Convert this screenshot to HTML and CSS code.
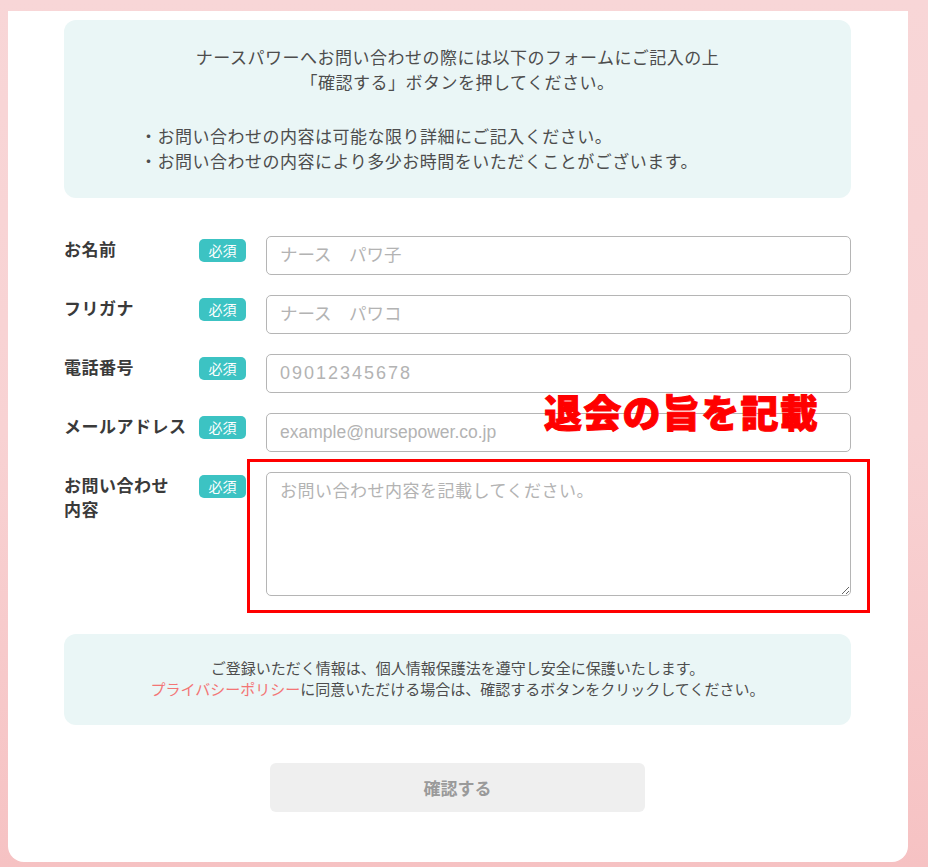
FILE: index.html
```html
<!DOCTYPE html>
<html lang="ja">
<head>
<meta charset="utf-8">
<title>お問い合わせ | ナースパワー</title>
<link rel="stylesheet" href="styles.css">
</head>
<body>
<div class="page">
  <main class="card">
    <section class="intro">
      <p class="intro-lead">ナースパワーへお問い合わせの際には以下のフォームにご記入の上<br>「確認する」ボタンを押してください。</p>
      <ul class="intro-notes">
        <li>・お問い合わせの内容は可能な限り詳細にご記入ください。</li>
        <li>・お問い合わせの内容により多少お時間をいただくことがございます。</li>
      </ul>
    </section>

    <form class="form">
      <div class="row">
        <label class="label" for="name">お名前</label>
        <span class="badge">必須</span>
        <input class="field" id="name" type="text" placeholder="ナース　パワ子">
      </div>
      <div class="row">
        <label class="label" for="kana">フリガナ</label>
        <span class="badge">必須</span>
        <input class="field" id="kana" type="text" placeholder="ナース　パワコ">
      </div>
      <div class="row">
        <label class="label" for="tel">電話番号</label>
        <span class="badge">必須</span>
        <input class="field field-tel" id="tel" type="tel" placeholder="09012345678">
      </div>
      <div class="row">
        <label class="label" for="mail">メールアドレス</label>
        <span class="badge">必須</span>
        <input class="field" id="mail" type="email" placeholder="example@nursepower.co.jp">
      </div>
      <div class="row">
        <label class="label" for="body">お問い合わせ<br>内容</label>
        <span class="badge">必須</span>
        <textarea class="field field-area" id="body" placeholder="お問い合わせ内容を記載してください。"></textarea>
      </div>

      <section class="privacy">
        <p>ご登録いただく情報は、個人情報保護法を遵守し安全に保護いたします。<br><a class="privacy-link" href="#">プライバシーポリシー</a>に同意いただける場合は、確認するボタンをクリックしてください。</p>
      </section>

      <div class="actions">
        <button class="submit" type="button" disabled>確認する</button>
      </div>
    </form>

    <div class="note-frame"></div>
    <p class="note-text">退会の旨を記載</p>
  </main>
</div>
</body>
</html>
```

FILE: styles.css
```css
html, body {
  margin: 0;
  padding: 0;
}

body {
  background: linear-gradient(to bottom, #f8d6d7 0%, #f8d2d3 50%, #f6c2c3 100%);
  font-family: "Noto Sans CJK JP", "Noto Sans", sans-serif;
  color: #4d4d4d;
  min-height: 867px;
}

.page {
  padding: 11px 20px 5px 8px;
}

.card {
  position: relative;
  width: 900px;
  height: 851px;
  box-sizing: border-box;
  background: #fff;
  border-radius: 0 0 16px 16px;
  padding: 9px 57px 0 56px;
}

/* Intro panel */
.intro {
  background: #eaf6f6;
  border-radius: 12px;
  padding: 24px 0 25px;
  font-size: 17px;
  line-height: 25px;
  letter-spacing: 0.5px;
  color: #4d4d4d;
}

.intro-lead {
  margin: 0;
  text-align: center;
}

.intro-notes {
  list-style: none;
  margin: 29px 0 0;
  padding: 0 0 0 76px;
}

/* Form rows */
.form {
  margin-top: 38px;
}

.row {
  display: flex;
  align-items: flex-start;
  margin-bottom: 20px;
}

.label {
  width: 135px;
  flex: none;
  font-size: 17px;
  line-height: 24px;
  font-weight: 700;
  letter-spacing: 0.5px;
  color: #3a3a3a;
  padding-top: 1px;
}

.badge {
  flex: none;
  width: 47px;
  height: 23px;
  margin-top: 3px;
  margin-right: 20px;
  border-radius: 5px;
  background: #3cc3c3;
  color: #fff;
  font-size: 14px;
  line-height: 23px;
  text-align: center;
}

.field {
  flex: none;
  width: 585px;
  height: 39px;
  box-sizing: border-box;
  border: 1px solid #b5b5b5;
  border-radius: 5px;
  padding: 0 13px;
  font-family: "Liberation Sans", "Noto Sans CJK JP", sans-serif;
  font-size: 17.5px;
  color: #333;
  background: #fff;
}

.field::placeholder {
  color: #b3b3b3;
}

.field-tel {
  font-size: 18px;
  letter-spacing: 2px;
}

.field-area {
  height: 124px;
  padding: 5px 13px;
  font-family: "Noto Sans CJK JP", sans-serif;
  font-size: 17px;
  line-height: 24px;
  letter-spacing: 0.5px;
  resize: vertical;
}

/* Privacy panel */
.privacy {
  margin-top: 38px;
  background: #eaf6f6;
  border-radius: 12px;
  padding: 23px 0 26px;
  text-align: center;
  font-size: 15px;
  line-height: 21px;
  color: #4d4d4d;
}

.privacy p {
  margin: 0;
}

.privacy-link {
  color: #f37575;
  text-decoration: none;
}

/* Submit */
.actions {
  display: flex;
  justify-content: center;
  margin-top: 38px;
}

.submit {
  width: 375px;
  height: 49px;
  border: none;
  border-radius: 6px;
  background: #efefef;
  color: #9a9a9a;
  font-family: "Noto Sans CJK JP", sans-serif;
  font-size: 17px;
  font-weight: 700;
}

/* Annotation drawn over the form */
.note-frame {
  position: absolute;
  left: 239px;
  top: 448px;
  width: 617px;
  height: 148px;
  border: 3px solid #ff0000;
  pointer-events: none;
}

.note-text {
  position: absolute;
  left: 536px;
  top: 375px;
  margin: 0;
  font-size: 38px;
  line-height: 50px;
  font-weight: 900;
  color: #ff0000;
  -webkit-text-stroke: 1px #ff0000;
  letter-spacing: 1.3px;
  white-space: nowrap;
}
```
